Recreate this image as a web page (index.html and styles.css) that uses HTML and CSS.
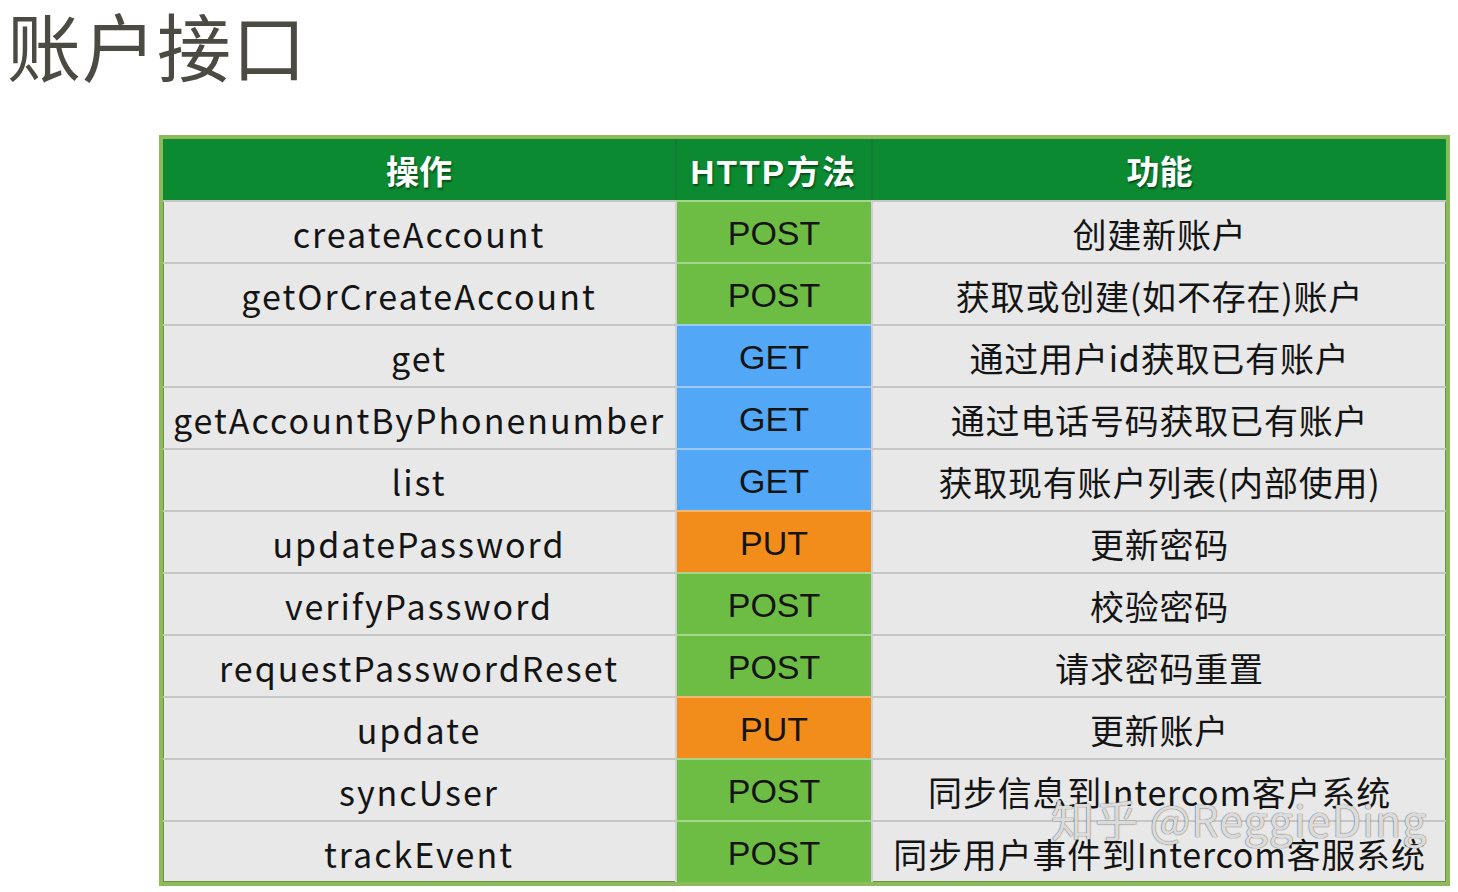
FILE: index.html
```html
<!DOCTYPE html>
<html lang="zh">
<head>
<meta charset="utf-8">
<title>账户接口</title>
<link rel="stylesheet" href="styles.css">
</head>
<body>
<h1 class="title">账户接口</h1>
<div class="wrap">
  <div class="table">
    <div class="hd">操作</div><div class="hd hd-latin">HTTP方法</div><div class="hd">功能</div>
    <div class="c op">createAccount</div><div class="c m post">POST</div><div class="c fn">创建新账户</div>
    <div class="c op">getOrCreateAccount</div><div class="c m post">POST</div><div class="c fn">获取或创建(如不存在)账户</div>
    <div class="c op">get</div><div class="c m get">GET</div><div class="c fn">通过用户id获取已有账户</div>
    <div class="c op">getAccountByPhonenumber</div><div class="c m get">GET</div><div class="c fn">通过电话号码获取已有账户</div>
    <div class="c op">list</div><div class="c m get">GET</div><div class="c fn">获取现有账户列表(内部使用)</div>
    <div class="c op">updatePassword</div><div class="c m put">PUT</div><div class="c fn">更新密码</div>
    <div class="c op">verifyPassword</div><div class="c m post">POST</div><div class="c fn">校验密码</div>
    <div class="c op">requestPasswordReset</div><div class="c m post">POST</div><div class="c fn">请求密码重置</div>
    <div class="c op">update</div><div class="c m put">PUT</div><div class="c fn">更新账户</div>
    <div class="c op">syncUser</div><div class="c m post">POST</div><div class="c fn">同步信息到Intercom客户系统</div>
    <div class="c op">trackEvent</div><div class="c m post">POST</div><div class="c fn">同步用户事件到Intercom客服系统</div>
  </div>
  <div class="watermark">知乎 @ReggieDing</div>
</div>
</body>
</html>
```
FILE: styles.css
```css
html, body {
  margin: 0;
  padding: 0;
  background: #ffffff;
}
body {
  font-family: "Noto Sans CJK SC", "Noto Sans", sans-serif;
  width: 1458px;
  height: 892px;
  overflow: hidden;
}
.title {
  margin: -10px 0 0 7px;
  font-size: 74px;
  line-height: normal;
  font-weight: 400;
  color: #4b4b43;
  letter-spacing: 1px;
}
.wrap {
  position: relative;
  margin: 38px 0 0 159px;
  width: 1291px;
}
.table {
  display: grid;
  grid-template-columns: 512px 196px 575px;
  grid-auto-rows: 62px;
  grid-template-rows: 61px;
  border: 4px solid #8dba5b;
  box-shadow: inset 0 0 0 1px #6f8f48;
  background: #e8e8e8;
}
.hd {
  background: #0b8a31;
  color: #ffffff;
  font-weight: 700;
  font-size: 33px;
  display: flex;
  align-items: center;
  justify-content: center;
  text-shadow: 1px 2px 2px rgba(0,0,0,0.45);
  border-left: 2px solid #177a30;
}
.hd:first-child { border-left: none; }
.hd-latin {
  font-family: "Liberation Sans", "Noto Sans CJK SC", sans-serif;
  letter-spacing: 2.5px;
}
.c {
  display: flex;
  align-items: center;
  justify-content: center;
  border-top: 2px solid #c6c6c6;
  border-left: 2px solid #cfcfcf;
  font-size: 34px;
  color: #141414;
  white-space: nowrap;
  padding-top: 2px;
  box-sizing: border-box;
}
.op { border-left: none; letter-spacing: 2px; }
.fn { letter-spacing: 0.8px; }
.m { font-family: "Liberation Sans", sans-serif; font-size: 34px; letter-spacing: 0; }
.post { background: #6dbd45; border-top-color: #a6d68b; }
.get { background: #52a7f6; border-top-color: #9ccaf2; }
.put { background: #f28d1c; border-top-color: #f3b774; }
.watermark {
  position: absolute;
  left: 892px;
  top: 652px;
  font-size: 43px;
  color: rgba(255,255,255,0.8);
  text-shadow: 0 0 1px rgba(90,90,90,0.9), 0 0 1px rgba(90,90,90,0.9);
  white-space: nowrap;
  letter-spacing: 1px;
}
```
